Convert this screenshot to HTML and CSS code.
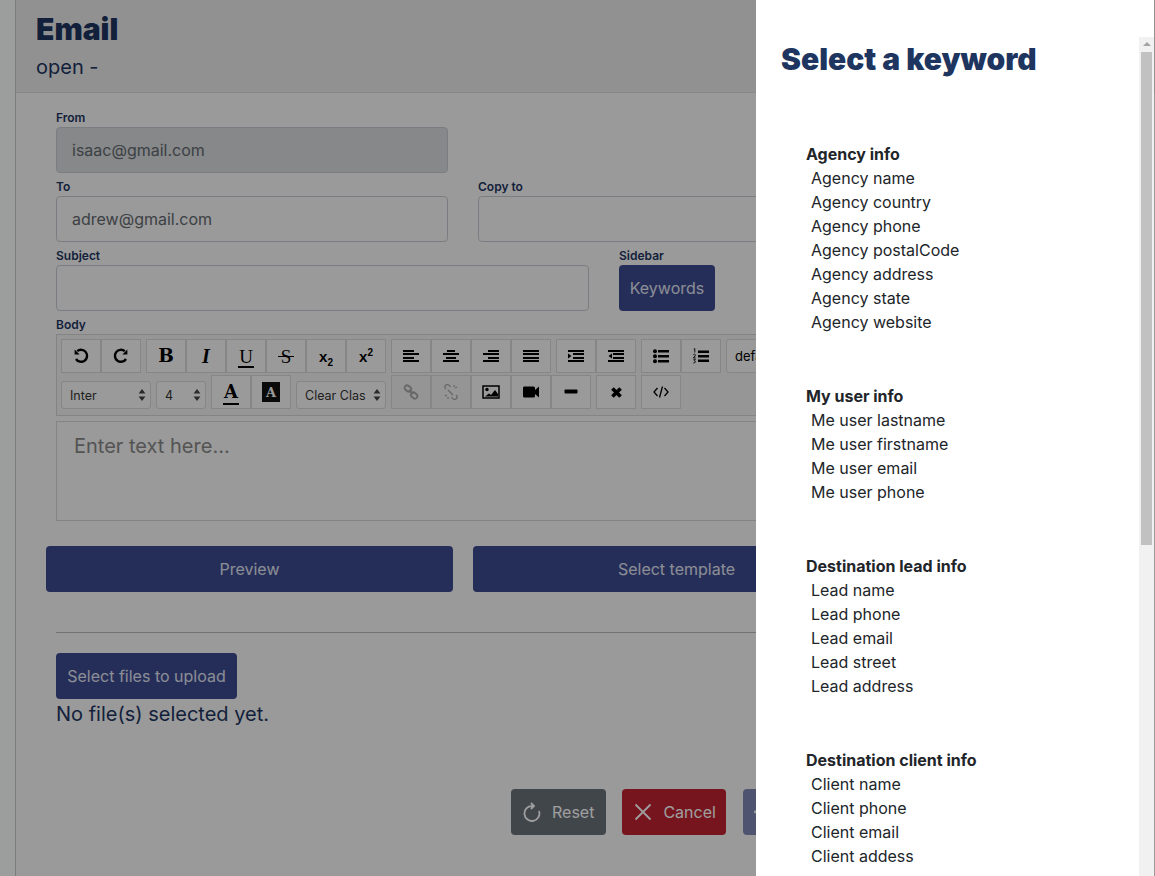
FILE: index.html
```html
<!DOCTYPE html>
<html lang="en">
<head>
<meta charset="utf-8">
<title>Email</title>
<link rel="stylesheet" href="styles.css">
</head>
<body>
<div class="page">
  <main class="card">
    <header class="card-head">
      <h1>Email</h1>
      <p class="status">open -</p>
    </header>
    <form class="card-body">
      <div class="row">
        <div class="field half"><label>From</label><div class="input disabled">isaac@gmail.com</div></div>
      </div>
      <div class="row">
        <div class="field half"><label>To</label><div class="input">adrew@gmail.com</div></div>
        <div class="field half"><label>Copy to</label><div class="input"></div></div>
      </div>
      <div class="row">
        <div class="field wide"><label>Subject</label><div class="input"></div></div>
        <div class="field"><label>Sidebar</label><button type="button" class="btn primary keywords">Keywords</button></div>
      </div>
      <div class="field body-field">
        <label>Body</label>
        <div class="toolbar">
          <div class="tool-row">
            <div class="group">
              <span class="tool"><svg class="ico" viewBox="0 0 16 16"><path d="M4.200 3.200A6 6 0 1 1 3 11" class="st"/><path d="M1.600 1.600v5h5z" class="fl"/></svg></span>
              <span class="tool"><svg class="ico" viewBox="0 0 16 16"><path d="M11.800 3.200A6 6 0 1 0 13 11" class="st"/><path d="M14.400 1.600v5h-5z" class="fl"/></svg></span>
            </div>
            <div class="group">
              <span class="tool glyph bold">B</span>
              <span class="tool glyph ital">I</span>
              <span class="tool glyph under"><span class="mark">U</span></span>
              <span class="tool glyph strike"><span class="mark">S</span></span>
              <span class="tool glyph script"><span>x<sub>2</sub></span></span>
              <span class="tool glyph script"><span>x<sup>2</sup></span></span>
            </div>
            <div class="group">
              <span class="tool"><svg class="ico" viewBox="0 0 16 16"><path d="M0 2h11v2H0zM0 5h16v2H0zM0 9h11v2H0zM0 12h16v2H0z" class="fl"/></svg></span>
              <span class="tool"><svg class="ico" viewBox="0 0 16 16"><path d="M4 2h8v2H4zM0 5h16v2H0zM3 9h10v2H3zM0 12h16v2H0z" class="fl"/></svg></span>
              <span class="tool"><svg class="ico" viewBox="0 0 16 16"><path d="M5 2h11v2H5zM0 5h16v2H0zM5 9h11v2H5zM0 12h16v2H0z" class="fl"/></svg></span>
              <span class="tool"><svg class="ico" viewBox="0 0 16 16"><path d="M0 2h16v2H0zM0 5h16v2H0zM0 9h16v2H0zM0 12h16v2H0z" class="fl"/></svg></span>
            </div>
            <div class="group">
              <span class="tool"><svg class="ico" viewBox="0 0 16 16"><path d="M0 2h16v2H0zM5 5h11v2H5zM5 9h11v2H5zM0 12h16v2H0zM0 5.500L3.500 8 0 10.500z" class="fl"/></svg></span>
              <span class="tool"><svg class="ico" viewBox="0 0 16 16"><path d="M0 2h16v2H0zM5 5h11v2H5zM5 9h11v2H5zM0 12h16v2H0zM4 5.500L.5 8 4 10.500z" class="fl"/></svg></span>
            </div>
            <div class="group">
              <span class="tool"><svg class="ico" viewBox="0 0 16 16"><path d="M5 2h11v2.500H5zM5 7h11v2.500H5zM5 12h11v2.500H5z" class="fl"/><circle cx="2" cy="3.200" r="2" class="fl"/><circle cx="2" cy="8.200" r="2" class="fl"/><circle cx="2" cy="13.200" r="2" class="fl"/></svg></span>
              <span class="tool"><svg class="ico" viewBox="0 0 16 16"><path d="M5 2.500h11v2.500H5zM5 7h11v2.500H5zM5 11.500h11V14H5z" class="fl"/><path d="M.8 1.200l1-.7v4M.4 6.500q1.400-.9 1.900.2T.4 9.800h2.200M.4 11.200h2L1.200 12.600q1.300 0 1.200 1.200T.4 15" class="num"/></svg></span>
            </div>
            <div class="group"><span class="tool style-pick">default</span></div>
          </div>
          <div class="tool-row">
            <div class="group spaced">
              <span class="select font-pick">Inter<svg class="updown" viewBox="0 0 8 12"><path d="M4 0l3.400 4.600H.6zM4 12L.6 7.400h6.800z"/></svg></span>
              <span class="select size-pick">4<svg class="updown" viewBox="0 0 8 12"><path d="M4 0l3.400 4.600H.6zM4 12L.6 7.400h6.800z"/></svg></span>
            </div>
            <div class="group">
              <span class="tool glyph color-a"><span class="mark">A</span></span>
              <span class="tool"><span class="glyph-box">A</span></span>
            </div>
            <div class="group">
              <span class="select class-pick">Clear Clas<svg class="updown" viewBox="0 0 8 12"><path d="M4 0l3.400 4.600H.6zM4 12L.6 7.400h6.800z"/></svg></span>
            </div>
            <div class="group">
              <span class="tool off"><svg class="ico" viewBox="0 0 16 16"><g class="st chain"><rect x="1.400" y="2" width="7" height="5" rx="2.500" transform="rotate(40 4.900 4.500)"/><rect x="7.600" y="9" width="7" height="5" rx="2.500" transform="rotate(40 11.100 11.500)"/><path d="M6 6l4 4"/></g></svg></span>
              <span class="tool off"><svg class="ico" viewBox="0 0 16 16"><g class="st thin"><path d="M3 5Q.5 2.500 3 1t4.500 2M13 11q2.500 2.500 0 4t-4.500-2M5 6l5 5"/><path d="M11 1v2M14 3l-2 1M2 12l2-1M5 13v2"/></g></svg></span>
              <span class="tool"><svg class="ico wide-ico" viewBox="0 0 18 16"><path d="M1 2h16v12H1z" class="st box"/><circle cx="5" cy="5.500" r="1.700" class="fl"/><path d="M3 12.500l4-3 2 1.500 4-5 3 4v2.500z" class="fl"/></svg></span>
              <span class="tool"><svg class="ico" viewBox="0 0 16 16"><path d="M2 2.500h8.500a1.500 1.500 0 0 1 1.500 1.500v8a1.500 1.500 0 0 1-1.500 1.500H2A1.500 1.500 0 0 1 0 12V4a1.500 1.500 0 0 1 2-1.500zM12 6l4-3.500v11L12 10z" class="fl"/></svg></span>
              <span class="tool"><svg class="ico" viewBox="0 0 16 16"><rect x="1.500" y="5.500" width="13" height="4" rx="1" class="fl"/></svg></span>
            </div>
            <div class="group">
              <span class="tool"><svg class="ico small" viewBox="0 0 16 16"><path d="M3 3l10 10M13 3L3 13" class="st heavy"/></svg></span>
            </div>
            <div class="group">
              <span class="tool"><svg class="ico" viewBox="0 0 16 16"><path d="M4.500 4L1 8l3.500 4M11.500 4L15 8l-3.500 4M9.500 2.500l-3 11" class="st thin"/></svg></span>
            </div>
          </div>
        </div>
        <div class="editor">Enter text here...</div>
      </div>
      <div class="actions">
        <button type="button" class="btn primary action">Preview</button>
        <button type="button" class="btn primary action">Select template</button>
      </div>
      <hr class="divider">
      <button type="button" class="btn primary upload">Select files to upload</button>
      <p class="no-files">No file(s) selected yet.</p>
      <div class="foot">
        <button type="button" class="btn dark"><svg class="btn-ico" viewBox="0 0 20 20"><path d="M9 1l3 3-3 3M12 4H10a7.500 7.500 0 1 0 7 5" class="st line"/></svg>Reset</button>
        <button type="button" class="btn danger"><svg class="btn-ico" viewBox="0 0 20 20"><path d="M2.500 2.500l15 15M17.500 2.500l-15 15" class="st line"/></svg>Cancel</button>
        <button type="button" class="btn primary faded"><svg class="btn-ico" viewBox="0 0 20 20"><path d="M0 10l18-8-4 16-4-6z" class="st line"/></svg></button>
      </div>
    </form>
  </main>
</div>
<div class="backdrop"></div>
<aside class="panel">
  <div class="panel-body">
    <h2>Select a keyword</h2>
    <section class="kw-group">
      <h3>Agency info</h3>
      <ul>
        <li>Agency name</li><li>Agency country</li><li>Agency phone</li><li>Agency postalCode</li><li>Agency address</li><li>Agency state</li><li>Agency website</li>
      </ul>
    </section>
    <section class="kw-group">
      <h3>My user info</h3>
      <ul>
        <li>Me user lastname</li><li>Me user firstname</li><li>Me user email</li><li>Me user phone</li>
      </ul>
    </section>
    <section class="kw-group">
      <h3>Destination lead info</h3>
      <ul>
        <li>Lead name</li><li>Lead phone</li><li>Lead email</li><li>Lead street</li><li>Lead address</li>
      </ul>
    </section>
    <section class="kw-group">
      <h3>Destination client info</h3>
      <ul>
        <li>Client name</li><li>Client phone</li><li>Client email</li><li>Client addess</li>
      </ul>
    </section>
  </div>
  <div class="rail"><span class="rail-up"></span><span class="thumb"></span></div>
</aside>
</body>
</html>
```
FILE: styles.css
```css
* { box-sizing: border-box; }
html, body { margin: 0; height: 100%; overflow: hidden; }
body { font-family: Inter, "Liberation Sans", sans-serif; font-size: 16px; color: #212529; background: #fff; }

.page { height: 876px; padding-left: 15px; overflow: hidden; background: #fcffff; }
.card { border-left: 1px solid #c8c8c8; height: 876px; width: 1140px; background: #f8f8f8; }
.card-head { height: 93px; padding: 11px 20px 0; background: #ebebeb; border-bottom: 1px solid #dcdcdc; color: #1e3560; }
.card-head h1 { margin: 0; font-size: 30px; line-height: 36px; font-weight: 900; }
.status { margin: 8px 0 0; font-size: 20px; line-height: 24px; }

.card-body { width: 884px; padding: 17px 0 0 40px; color: #1e3560; }
.row { display: flex; gap: 30px; height: 69px; }
.field { display: flex; flex-direction: column; }
.half { width: 392px; }
.wide { width: 533px; }
.field label { font-size: 12px; font-weight: 600; line-height: 16px; height: 17px; }
.input { height: 46px; border: 1px solid #c6ccd2; border-radius: 4px; padding: 0 15px; font-size: 16px; line-height: 44px; color: #63696f; }
.input.disabled { background: #d8dbde; }

.btn { height: 46px; border: 0; border-radius: 4px; font-family: inherit; font-size: 16px; color: #fff; padding: 0 11px; }
.btn.primary { background: #3d4a90; color: #e0e4f0; }
.btn.dark { background: #697179; }
.btn.danger { background: #c12232; }
.btn.faded { opacity: .65; }
.keywords { width: 96px; padding: 0; }

.body-field { width: 830px; }
.toolbar { height: 82px; border: 1px solid #d6d6d6; padding: 4px; background: #f2f2f2; }
.tool-row { display: flex; height: 34px; gap: 5px; margin-bottom: 2px; }
.group { display: flex; align-items: flex-start; }
.group.spaced { gap: 5px; }
.tool-row:last-child .group { align-items: flex-end; }
.tool { width: 40px; height: 34px; border: 1px solid #d8d8d8; display: flex; align-items: center; justify-content: center; color: #000; flex: none; background: #f8f8f8; }
.tool.off { background: #f0f0f0; }
.tool.off svg { opacity: .3; }
.ico { width: 16px; height: 16px; display: block; }
.ico.small { width: 13px; height: 13px; }
.ico.wide-ico { width: 18px; }
.st { fill: none; stroke: #000; stroke-width: 2.400; }
.st.thin { stroke-width: 1.300; fill: none; stroke: #000; }
.st.chain { stroke-width: 1.800; }
.st.box { stroke-width: 1.500; }
.st.line { stroke-width: 1.800; stroke: currentColor; }
.st.heavy { stroke-width: 4.500; }
.fl { fill: #000; }
.num { fill: none; stroke: #000; stroke-width: .9; }
.glyph { font-family: "DejaVu Serif", "Liberation Serif", serif; font-size: 18.500px; font-weight: 700; line-height: 1; }
.ital { font-style: italic; font-size: 20px; font-family: "Liberation Serif", serif; }
.mark { position: relative; display: block; }
.under { font-family: "Liberation Serif", serif; font-size: 19px; font-weight: 400; }
.under .mark::after, .strike .mark::after, .color-a .mark::after { content: ""; position: absolute; left: -1px; right: -1px; background: #000; }
.under .mark::after { bottom: -2px; height: 2px; }
.strike { font-family: "Liberation Serif", serif; font-size: 19px; font-weight: 400; }
.strike .mark::after { top: 9px; left: -3px; right: -3px; height: 1px; }
.color-a { font-size: 18px; }
.color-a .mark::after { bottom: -4px; height: 2px; }
.script { font-family: "Liberation Sans", sans-serif; font-size: 15px; }
.script sub, .script sup { font-size: 10px; line-height: 0; }
.glyph-box { width: 18px; height: 20px; background: #111; color: #f8f8f8; font-family: "DejaVu Serif", serif; font-weight: 700; font-size: 13px; display: flex; align-items: center; justify-content: center; }
.style-pick { width: 60px; justify-content: flex-start; padding-left: 8px; font-family: Inter, sans-serif; font-size: 13px; font-weight: 400; border-radius: 3px 0 0 3px; }
.select { height: 28px; border: 1px solid #d8d8d8; border-radius: 3px; display: flex; align-items: center; justify-content: space-between; padding: 0 4px 0 8px; font-size: 12.500px; color: #333; background: #f8f8f8; flex: none; }
.font-pick { width: 90px; }
.size-pick { width: 50px; }
.class-pick { width: 90px; }
.updown { width: 8px; height: 12px; fill: #444; flex: none; }

.editor { margin-top: 5px; height: 100px; border: 1px solid #d6d6d6; padding: 11px 17px; font-size: 20px; line-height: 26px; color: #888; }

.actions { display: flex; gap: 20px; margin: 25px 0 0 -10px; }
.action { width: 407px; }
.divider { margin: 40px 0 20px; width: 830px; border: 0; border-top: 1px solid #b8b8b8; }
.upload { display: block; width: 181px; padding: 0; }
.no-files { margin: 2px 0 0; font-size: 20px; line-height: 27px; color: #1e3560; }
.foot { display: flex; gap: 16.400px; margin: 61px 0 0 455px; }
.foot .btn { display: flex; align-items: center; gap: 10px; padding: 0 0 0 11px; white-space: nowrap; }
.foot .dark { width: 95px; }
.foot .danger { width: 104px; }
.foot .faded { width: 100px; }
.btn-ico { width: 20px; height: 20px; flex: none; color: #fff; }

.backdrop { position: fixed; inset: 0; background: rgba(0, 0, 0, .38); }

.panel { position: fixed; top: 0; bottom: 0; right: 1px; width: 398px; background: #fff; display: flex; overflow: hidden; }
.panel-body { flex: 1; padding: 41px 0 0 25px; min-width: 0; }
.panel-body h2 { margin: 0 0 65px; font-size: 30px; line-height: 36px; font-weight: 900; color: #1e3560; }
.kw-group { margin: 0 0 50px 25px; }
.kw-group h3 { margin: 0; font-size: 16px; line-height: 24px; font-weight: 700; color: #212529; }
.kw-group ul { margin: 0; padding: 0 0 0 5px; list-style: none; }
.kw-group li { line-height: 24px; color: #212529; }
.rail { width: 15px; margin-top: 37px; background: #f1f1f1; display: flex; flex-direction: column; align-items: center; flex: none; }
.rail-up { width: 0; height: 0; margin: 5px 0 5px; border-left: 4px solid transparent; border-right: 4px solid transparent; border-bottom: 4px solid #a3a3a3; flex: none; }
.thumb { width: 11px; height: 493px; background: #c1c1c1; margin-top: 1px; flex: none; }
```
